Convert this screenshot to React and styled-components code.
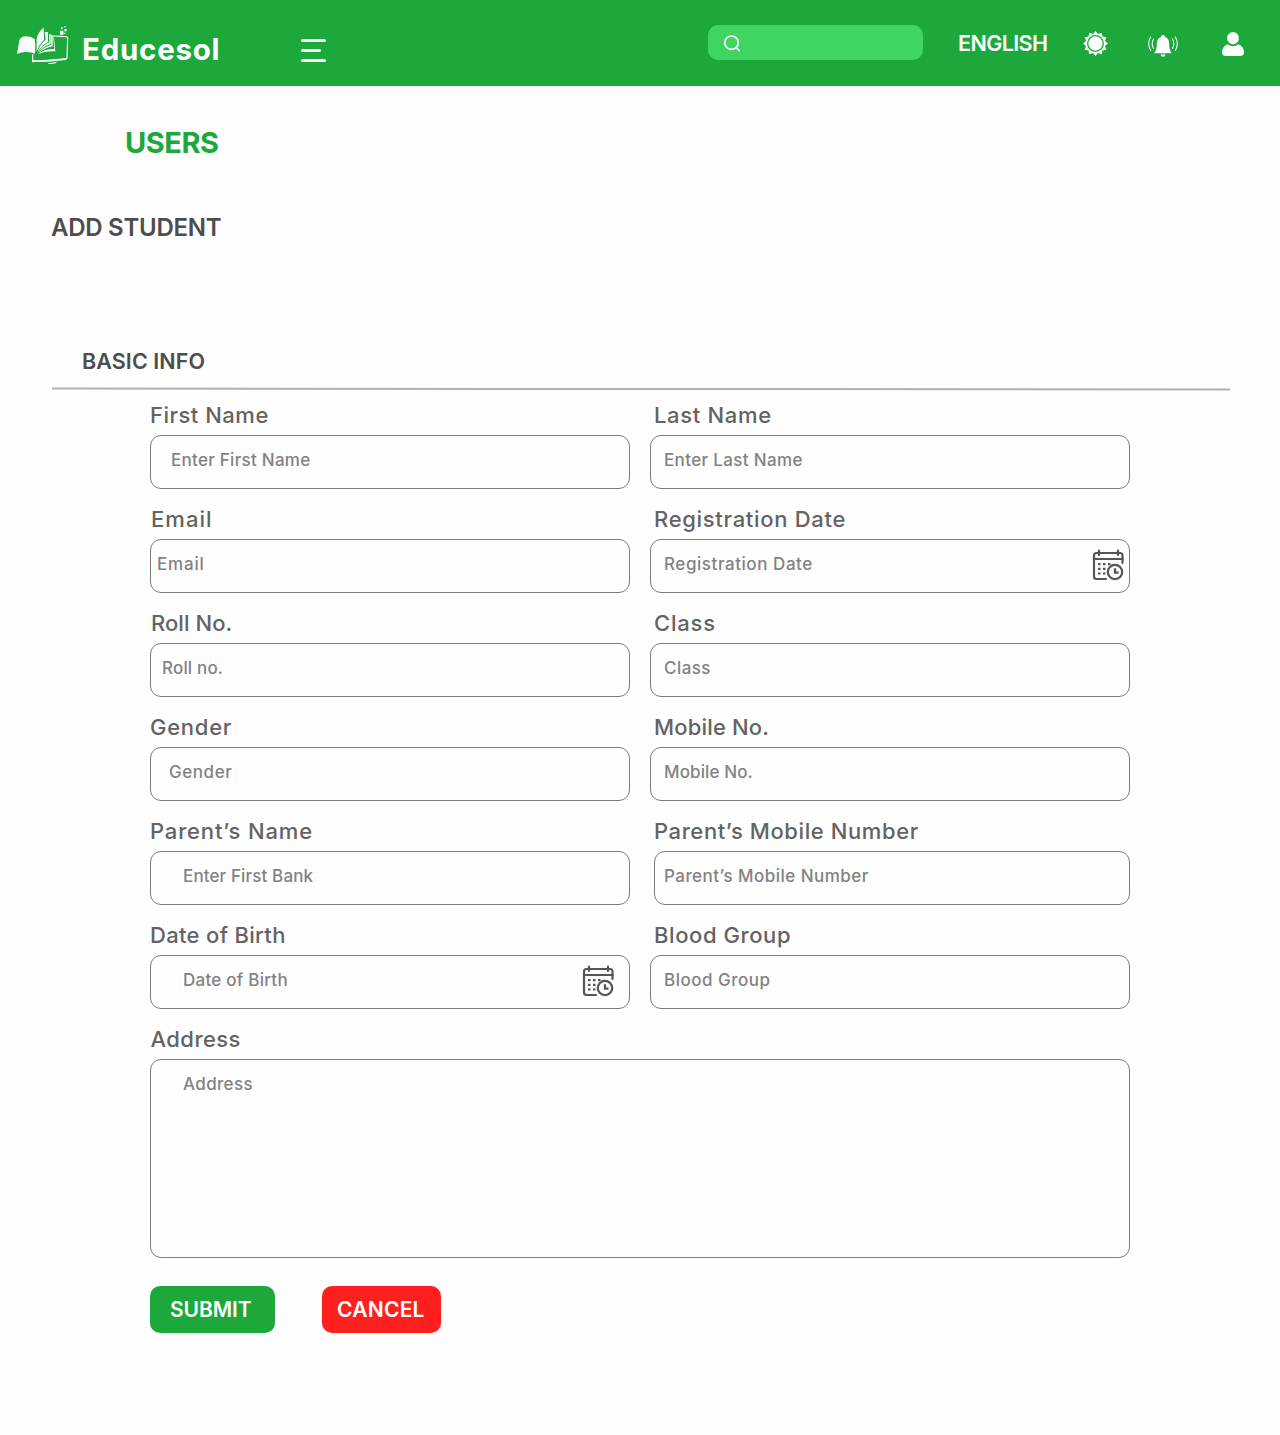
import React from 'react';
import styled, { createGlobalStyle } from 'styled-components';

const GREEN = '#1ca83a';

const Global = createGlobalStyle`
  *, *::before, *::after { box-sizing: border-box; }
  body { margin: 0; background: #fdfdfd; font-family: Inter, 'Open Sans', sans-serif; }
`;

const Page = styled.div`
  width: 1280px;
  min-height: 1435px;
  padding-bottom: 42px;
`;

const Header = styled.header`
  display: flex;
  justify-content: space-between;
  height: 86px;
  padding: 0 36px 0 15px;
  background: ${GREEN};
  color: #fff;
`;

const Brand = styled.div`
  display: flex;
  align-items: flex-start;
`;

const Logo = styled.svg`
  width: 55px;
  height: 43px;
  margin-top: 23px;
`;

const BrandName = styled.span`
  width: 219px;
  margin: 31px 0 0 12px;
  font-size: 29.5px;
  font-weight: 700;
  line-height: 36px;
  letter-spacing: 0.73px;
`;

const MenuButton = styled.button`
  display: flex;
  flex-direction: column;
  gap: 7px;
  margin: 39px 0 0;
  padding: 0;
  border: 0;
  background: none;
`;

const MenuBar = styled.span`
  width: ${(p) => p.$width}px;
  height: 3px;
  border-radius: 2px;
  background: #fff;
`;

const Tools = styled.div`
  display: flex;
  align-items: flex-start;
`;

const Search = styled.label`
  display: flex;
  align-items: center;
  gap: 10px;
  width: 215px;
  height: 35px;
  margin-top: 25px;
  padding: 0 12px 0 15px;
  border-radius: 10px;
  background: #40d562;
`;

const SearchInput = styled.input`
  min-width: 0;
  flex: 1;
  border: 0;
  outline: 0;
  background: none;
  color: #fff;
  font: 500 15px Inter, sans-serif;
`;

const Language = styled.span`
  width: 126px;
  margin: 30px 0 0 35px;
  font-size: 21.5px;
  font-weight: 600;
  line-height: 26px;
  letter-spacing: -0.59px;
`;

const ToolIcon = styled.svg`
  flex: none;
  width: ${(p) => p.$w}px;
  height: ${(p) => p.$h}px;
  margin: ${(p) => p.$top}px 0 0 ${(p) => p.$left || 0}px;
`;

const TitlePanel = styled.section`
  width: 1180px;
  height: 58px;
  margin: 28px 0 0 50px;
  padding: 9px 0 0 75px;
  background: #fefefe;
`;

const Title = styled.h1`
  margin: 0;
  color: ${GREEN};
  font-size: 29px;
  font-weight: 700;
  line-height: 40px;
  letter-spacing: -0.47px;
`;

const Band = styled.section`
  height: 72px;
  margin-top: 23px;
  padding: 17px 0 0 51px;
  background: #fefefe;
`;

const Subtitle = styled.h2`
  margin: 0;
  color: #4d4d4d;
  font-size: 24px;
  font-weight: 600;
  line-height: 32px;
  letter-spacing: -0.27px;
`;

const Card = styled.section`
  width: 1180px;
  height: 1070px;
  margin: 56px 0 0 50px;
  border-radius: 12px;
  background: #fefefe;
`;

const CardHead = styled.div`
  height: 64.5px;
  padding: 23px 0 0 32px;
`;

const CardTitle = styled.h3`
  margin: 0;
  color: #4d4d4d;
  font-size: 21.5px;
  font-weight: 600;
  line-height: 30px;
  letter-spacing: 0.09px;
`;

const Divider = styled.div`
  height: 2px;
  margin: 0 0 0 2px;
  background: #b1b1b1;
  transform: rotate(0.05deg);
`;

const Form = styled.form`
  display: flex;
  flex-direction: column;
  width: 980px;
  margin: 6.5px 0 0 100px;
`;

const Grid = styled.div`
  display: grid;
  grid-template-columns: 480px 480px;
  gap: 11px 20px;
  margin-bottom: 11px;
`;

const Field = styled.label`
  display: flex;
  flex-direction: column;
`;

const Label = styled.span`
  height: 39px;
  padding-left: ${(p) => p.$x}px;
  color: #636363;
  font-size: 22px;
  font-weight: 500;
  line-height: 39px;
  letter-spacing: ${(p) => p.$ls}px;
  white-space: nowrap;
`;

const Box = styled.span`
  display: flex;
  align-items: center;
  height: 54px;
  margin-left: ${(p) => p.$inset || 0}px;
  padding-right: ${(p) => p.$end || 10}px;
  border: 1px solid #7d7d7d;
  border-radius: 11px;
  background: #fefefe;
`;

const Input = styled.input`
  flex: 1;
  min-width: 0;
  height: 100%;
  padding: 0 0 4px ${(p) => p.$x}px;
  border: 0;
  outline: 0;
  background: none;
  color: #555;
  font: 500 17px Inter, 'Open Sans', sans-serif;
  letter-spacing: ${(p) => p.$ls}px;
  &::placeholder { color: #828282; opacity: 1; }
`;

const TextArea = styled.textarea`
  height: 199px;
  padding: 14px 32px;
  border: 1px solid #7d7d7d;
  border-radius: 11px;
  outline: 0;
  resize: none;
  background: #fefefe;
  color: #555;
  font: 500 17px/21px Inter, 'Open Sans', sans-serif;
  letter-spacing: 0.35px;
  &::placeholder { color: #828282; opacity: 1; }
`;

const Actions = styled.div`
  display: flex;
  gap: 47px;
  margin-top: 28px;
`;

const Button = styled.button`
  width: ${(p) => p.$width}px;
  height: 47px;
  padding: 0 0 0 ${(p) => p.$x}px;
  border: 0;
  border-radius: 10px;
  background: ${(p) => p.$color};
  color: #fff;
  font: 600 21px Inter, 'Open Sans', sans-serif;
  letter-spacing: ${(p) => p.$ls}px;
  text-align: left;
`;

const CalendarSvg = styled.svg`
  flex: none;
  width: 32px;
  height: 32px;
  margin-bottom: 2px;
`;

function Calendar() {
  return (
    <CalendarSvg viewBox="0 0 32 32" fill="none" stroke="#555" strokeWidth="2.200" strokeLinecap="round">
      <path d="M14 30H4.500A2.500 2.500 0 0 1 2 27.500V6.500A2.500 2.500 0 0 1 4.500 4H28A2.500 2.500 0 0 1 30.500 6.500V14" />
      <path d="M2 10H30.500M7 1.500V6M26 1.500V6" />
      <g fill="#555" stroke="none">
        <path d="M6 14h2.500v2.200H6zM11 14h2.500v2.200H11zM16 14h2.500v2.200H16zM6 18.700h2.500v2.200H6zM11 18.700h2.500v2.200H11zM6 23.400h2.500v2.200H6zM11 23.400h2.500v2.200H11z" />
      </g>
      <circle cx="23" cy="23" r="7.200" />
      <path d="M23 19.200V23.600H26.500" strokeLinecap="butt" />
    </CalendarSvg>
  );
}

function BrandLogo() {
  return (
    <Logo viewBox="45 39 165 129" fill="#fff">
      <path d="M51 132L58 91Q60 83 68 80Q87 75 104 87L106 106L105 131Q92 125 77 126Q63 126 51 132Z" />
      <path d="M110 125V86Q111 76 118 67Q125 57 131 53L132 90Q117 103 110 125Z" />
      <path d="M134 66L144 66V96Q124 106 112 127Q118 105 137 89Z" />
      <path d="M147 73L152 72V102Q130 108 114 129Q124 108 148 97Z" />
      <path d="M153 76L158 75V109Q134 113 116 130Q129 111 154 104Z" />
      <path d="M160 83L162 82L166 124Q137 121 113 133Q132 117 163 117Z" />
      <path d="M158 78L198 80Q203 80 203 85L201 143Q201 147 196 148L98 155V133" fill="none" stroke="#fff" strokeWidth="3.500" />
      <path d="M97 150Q145 152 198 144L197 149Q145 158 97 156Z" />
      <path d="M144 159Q157 159 171 155L167 160Q155 163 147 162Z" />
      <path d="M180 62h10v12h-10zM183 52h5v5h-5zM193 57h7v7h-7zM191 68h5v4h-5zM193 48h4v4h-4z" />
    </Logo>
  );
}

const sunTeeth = Array.from({ length: 24 }, (_, i) => {
  const a = (i * Math.PI) / 12 - Math.PI / 2;
  const r = i % 2 === 0 ? 12.4 : 9.8;
  return `${(12.5 + r * Math.cos(a)).toFixed(2)},${(12.5 + r * Math.sin(a)).toFixed(2)}`;
}).join(' ');

const fields = [
  { label: 'First Name', lx: 0, ls: 0.5, hint: 'Enter First Name', hx: 20, hs: 0.27 },
  { label: 'Last Name', lx: 4, ls: 0.67, hint: 'Enter Last Name', hx: 13, hs: 0.35 },
  { label: 'Email', lx: 1, ls: 1.05, hint: 'Email', hx: 6, hs: 0.8 },
  { label: 'Registration Date', lx: 4, ls: 0.69, hint: 'Registration Date', hx: 13, hs: 0.56, calendar: true, end: 5 },
  { label: 'Roll No.', lx: 1, ls: 0.05, hint: 'Roll no.', hx: 11, hs: 0.17 },
  { label: 'Class', lx: 4, ls: 0.8, hint: 'Class', hx: 13, hs: 0.45 },
  { label: 'Gender', lx: 0, ls: 0.74, hint: 'Gender', hx: 18, hs: 0.55 },
  { label: 'Mobile No.', lx: 4, ls: 0.17, hint: 'Mobile No.', hx: 13, hs: 0.12 },
  { label: 'Parent’s Name', lx: 0, ls: 0.83, hint: 'Enter First Bank', hx: 32, hs: 0.13 },
  { label: 'Parent’s Mobile Number', lx: 4, ls: 0.59, hint: 'Parent’s Mobile Number', hx: 9, hs: 0.46, inset: 4 },
  { label: 'Date of Birth', lx: 0, ls: 0.32, hint: 'Date of Birth', hx: 32, hs: 0.25, calendar: true, end: 15 },
  { label: 'Blood Group', lx: 4, ls: 0.58, hint: 'Blood Group', hx: 13, hs: 0.5 },
];

export default function App() {
  return (
    <Page>
      <Global />
      <Header>
        <Brand>
          <BrandLogo />
          <BrandName>Educesol</BrandName>
          <MenuButton type="button" aria-label="Menu">
            <MenuBar $width={25} />
            <MenuBar $width={20} />
            <MenuBar $width={25} />
          </MenuButton>
        </Brand>
        <Tools>
          <Search>
            <svg width="18" height="18" viewBox="0 0 18 18" fill="none" stroke="#f1fdf4" strokeWidth="1.700" strokeLinecap="round">
              <circle cx="8.500" cy="8.700" r="6.700" />
              <path d="M13.300 13.700L16.200 16.600" />
            </svg>
            <SearchInput aria-label="Search" />
          </Search>
          <Language>ENGLISH</Language>
          <ToolIcon $w={25} $h={25} $top={31} $left={-1} viewBox="0 0 25 25">
            <polygon points={sunTeeth} fill="#fff" />
            <circle cx="12.500" cy="12.500" r="7.800" fill="#fff" stroke={GREEN} strokeWidth="1.300" />
          </ToolIcon>
          <ToolIcon $w={30} $h={24} $top={34} $left={40} viewBox="0 0 30 24" fill="#fff">
            <path d="M15 1a2 2 0 0 1 2 1.900C20 4 21.200 6.500 21.200 9.500C21.200 15 22 17 24 19.200H6C8 17 8.800 15 8.800 9.500C8.800 6.500 10 4 13 2.900A2 2 0 0 1 15 1Z" />
            <path d="M12.500 20.500h5Q17 22.800 15 22.800Q13 22.800 12.500 20.500Z" />
            <path d="M5.500 5Q2.800 9.800 5.500 14.500M2.600 3Q-1.200 9.800 2.600 16.500M24.500 5Q27.200 9.800 24.500 14.500M27.400 3Q31.200 9.800 27.400 16.500" fill="none" stroke="#fff" strokeWidth="1.100" strokeLinecap="round" />
          </ToolIcon>
          <ToolIcon $w={22} $h={24} $top={32} $left={44} viewBox="0 0 22 24" fill="#fff">
            <ellipse cx="11" cy="6.200" rx="5.800" ry="6.200" />
            <path d="M5.500 12.300Q11 16 16.500 12.300Q21.600 14 22 20.500Q22 24 17.500 24H4.500Q0 24 0 20.500Q.4 14 5.500 12.300Z" />
          </ToolIcon>
        </Tools>
      </Header>
      <TitlePanel><Title>USERS</Title></TitlePanel>
      <Band><Subtitle>ADD STUDENT</Subtitle></Band>
      <Card>
        <CardHead><CardTitle>BASIC INFO</CardTitle></CardHead>
        <Divider />
        <Form>
          <Grid>
            {fields.map((f) => (
              <Field key={f.label}>
                <Label $x={f.lx} $ls={f.ls}>{f.label}</Label>
                <Box $inset={f.inset} $end={f.end}>
                  <Input placeholder={f.hint} $x={f.hx} $ls={f.hs} />
                  {f.calendar && <Calendar />}
                </Box>
              </Field>
            ))}
          </Grid>
          <Field>
            <Label $x={0.5} $ls={0.42}>Address</Label>
            <TextArea placeholder="Address" />
          </Field>
          <Actions>
            <Button type="button" $width={125} $x={20} $ls={-0.1} $color={GREEN}>SUBMIT</Button>
            <Button type="button" $width={119} $x={15} $ls={0.25} $color="#ff1f1f">CANCEL</Button>
          </Actions>
        </Form>
      </Card>
    </Page>
  );
}
